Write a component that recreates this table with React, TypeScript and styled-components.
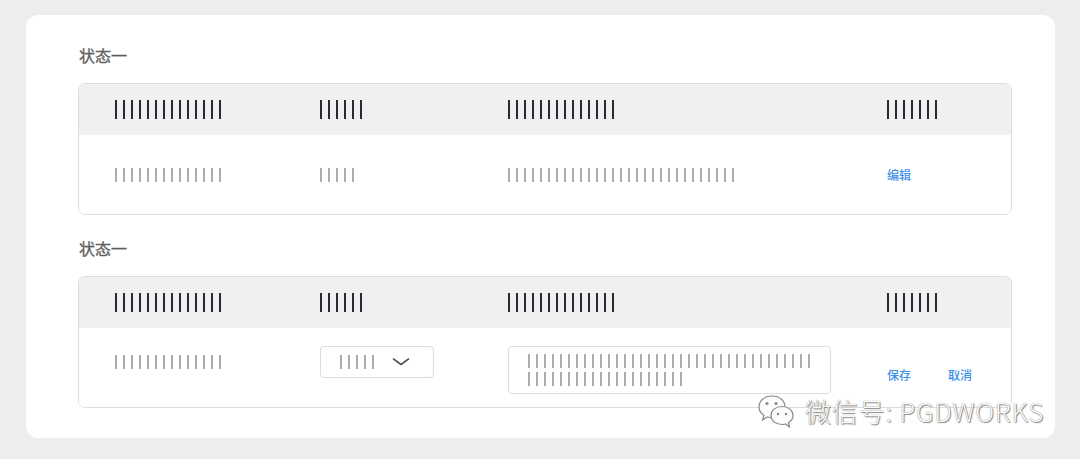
import styled, { createGlobalStyle } from "styled-components";

const GlobalStyle = createGlobalStyle`
  body {
    margin: 0;
    background: #ededed;
    font-family: "Noto Sans CJK SC", "Noto Sans", sans-serif;
  }
`;

const Page = styled.div`
  position: relative;
  width: 1080px;
  height: 459px;
  box-sizing: border-box;
  padding: 15px 25px 21px 26px;
  background: #ededed;
`;

const Card = styled.div`
  height: 100%;
  box-sizing: border-box;
  background: #ffffff;
  border-radius: 12px;
  padding: 29px 43px 30px 52px;
  display: flex;
  flex-direction: column;
`;

const Title = styled.div<{ $top?: number }>`
  margin-top: ${(p) => p.$top ?? 0}px;
  padding-left: 1px;
  height: 22px;
  line-height: 22px;
  font-size: 16px;
  font-weight: 400;
  color: #5e5e5e;
  -webkit-text-stroke: 0.3px #5e5e5e;
`;

const Table = styled.div`
  margin-top: 17px;
  border: 1px solid #dddddd;
  border-radius: 7px;
  overflow: hidden;
`;

const Row = styled.div<{ $head?: boolean; $edit?: boolean }>`
  display: grid;
  grid-template-columns: 205px 188px 379px 1fr;
  padding-left: 36px;
  height: ${(p) => (p.$head ? 51 : 79)}px;
  box-sizing: border-box;
  background: ${(p) => (p.$head ? "#f0f0f0" : "#ffffff")};
  align-items: ${(p) => (p.$edit ? "start" : "center")};
  padding-top: ${(p) => (p.$edit ? 18 : 0)}px;
`;

const Cell = styled.div<{ $offset?: number }>`
  display: flex;
  align-items: center;
  min-height: ${(p) => (p.$offset !== undefined ? 0 : 32)}px;
  margin-top: ${(p) => p.$offset ?? 0}px;
`;

const Bars = styled.span<{ $n: number; $head?: boolean }>`
  display: inline-block;
  flex: none;
  width: ${(p) => (p.$n - 1) * 8 + 2}px;
  height: ${(p) => (p.$head ? 19 : 14)}px;
  background: repeating-linear-gradient(
    to right,
    ${(p) => (p.$head ? "#2a2a35" : "#acacac")} 0 2px,
    transparent 2px 8px
  );
`;

const Link = styled.span`
  font-size: 12px;
  line-height: 17px;
  font-weight: 500;
  color: #3d8fe8;
  margin-right: 37px;
`;

const Select = styled.div`
  width: 114px;
  height: 32px;
  box-sizing: border-box;
  border: 1px solid #dcdcdc;
  border-radius: 4px;
  display: flex;
  align-items: center;
  padding-left: 19px;
  gap: 18px;
`;

const TextArea = styled.div`
  width: 323px;
  height: 48px;
  box-sizing: border-box;
  border: 1px solid #dcdcdc;
  border-radius: 4px;
  padding: 7px 0 0 19px;
  display: flex;
  flex-direction: column;
  gap: 4px;
`;

const Watermark = styled.div`
  position: absolute;
  left: 757px;
  top: 392px;
  display: flex;
  align-items: center;
  gap: 10px;
  font-family: "Noto Sans CJK SC", "Noto Sans", sans-serif;
  font-weight: 300;
  font-size: 26px;
  letter-spacing: 0.8px;
  color: #fafafa;
  text-shadow: 0 0 1px #6e6e6e, 1px 1px 1px #8a8a8a;
`;

const Chevron = () => (
  <svg width="18" height="10" viewBox="0 0 18 10">
    <polyline points="1.5,2 9,7.5 16.5,2" fill="none" stroke="#555" strokeWidth="1.6" strokeLinecap="round" strokeLinejoin="round" />
  </svg>
);

const WeChat = () => (
  <svg width="38" height="36" viewBox="0 0 38 36">
    <g fill="#fcfcfc" stroke="#8a8a8a" strokeWidth="1.2">
      <path d="M15 3 C7 3 2 8 2 14 C2 18 4 20.5 7 22.5 L5.5 27 L10.5 24 C12 24.5 13.5 24.7 15 24.7 C23 24.7 28 19.5 28 14 C28 8 23 3 15 3 Z" />
      <path d="M25 13.5 C18.5 13.5 14 17.5 14 22.5 C14 27.5 18.5 31.5 25 31.5 C26.3 31.5 27.4 31.3 28.5 31 L32.5 34 L31.5 29.5 C34.5 27.8 36 25.3 36 22.5 C36 17.5 31.5 13.5 25 13.5 Z" />
    </g>
    <g fill="#8a8a8a">
      <circle cx="10" cy="10.5" r="1.6" />
      <circle cx="19" cy="10.5" r="1.6" />
      <circle cx="21" cy="21" r="1.3" />
      <circle cx="29" cy="21" r="1.3" />
    </g>
  </svg>
);

const App = () => {
  return (
    <Page>
      <GlobalStyle />
      <Card>
        <Title>状态一</Title>
        <Table>
          <Row $head>
            <Cell><Bars $n={14} $head /></Cell>
            <Cell><Bars $n={6} $head /></Cell>
            <Cell><Bars $n={14} $head /></Cell>
            <Cell><Bars $n={7} $head /></Cell>
          </Row>
          <Row>
            <Cell><Bars $n={14} /></Cell>
            <Cell><Bars $n={5} /></Cell>
            <Cell><Bars $n={29} /></Cell>
            <Cell><Link>编辑</Link></Cell>
          </Row>
        </Table>

        <Title $top={22}>状态一</Title>
        <Table>
          <Row $head>
            <Cell><Bars $n={14} $head /></Cell>
            <Cell><Bars $n={6} $head /></Cell>
            <Cell><Bars $n={14} $head /></Cell>
            <Cell><Bars $n={7} $head /></Cell>
          </Row>
          <Row $edit>
            <Cell><Bars $n={14} /></Cell>
            <Cell>
              <Select>
                <Bars $n={5} />
                <Chevron />
              </Select>
            </Cell>
            <Cell>
              <TextArea>
                <Bars $n={36} />
                <Bars $n={20} />
              </TextArea>
            </Cell>
            <Cell $offset={20}>
              <Link>保存</Link>
              <Link>取消</Link>
            </Cell>
          </Row>
        </Table>
      </Card>
      <Watermark>
        <WeChat />
        <span>微信号: PGDWORKS</span>
      </Watermark>
    </Page>
  );
};

export default App;
